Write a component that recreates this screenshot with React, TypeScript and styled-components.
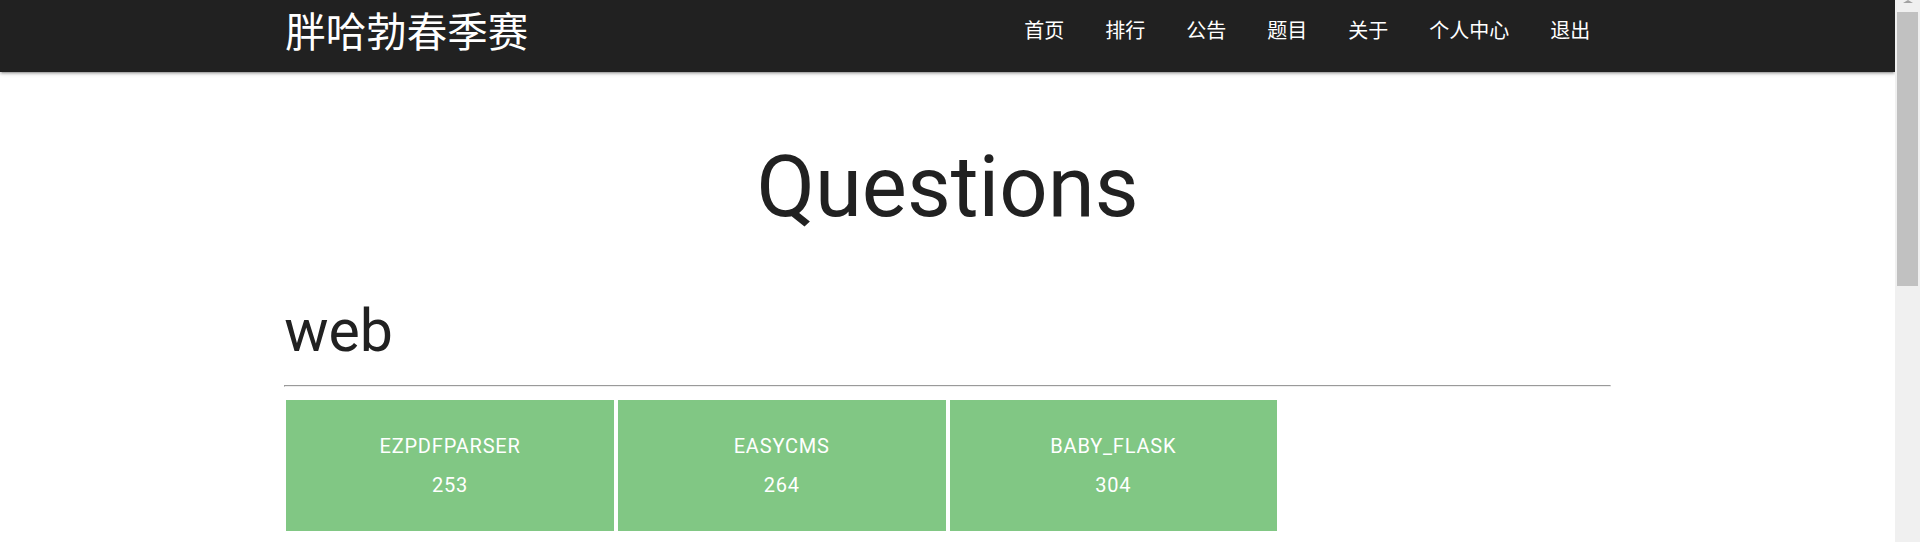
import React from "react";
import styled, { createGlobalStyle } from "styled-components";

const GlobalStyle = createGlobalStyle`
  html, body {
    margin: 0;
    padding: 0;
    height: 100%;
    overflow: hidden;
    background: #ffffff;
  }
  body {
    font-family: Roboto, "Noto Sans CJK SC", sans-serif;
    color: #212121;
  }
  #root { height: 100%; }
`;

const Shell = styled.div`
  display: flex;
  height: 100vh;
  width: 100%;
`;

const Main = styled.div`
  flex: 1;
  min-width: 0;
  overflow: hidden;
`;

const ScrollRail = styled.div`
  width: 25px;
  flex: none;
  background: #f0f0f0;
  display: flex;
  flex-direction: column;
  align-items: center;
`;

const ScrollArrow = styled.div`
  width: 0;
  height: 0;
  border-left: 5px solid transparent;
  border-right: 5px solid transparent;
  border-bottom: 3px solid #a3a3a3;
`;

const ScrollThumb = styled.div`
  width: 21px;
  height: 274px;
  margin-top: 9px;
  background: #c1c1c1;
`;

const Nav = styled.nav`
  height: 72px;
  background: #212121;
  box-shadow: 0 2px 2px 0 rgba(0, 0, 0, 0.14), 0 3px 1px -2px rgba(0, 0, 0, 0.12),
    0 1px 5px 0 rgba(0, 0, 0, 0.2);
  position: relative;
  z-index: 1;
`;

const Container = styled.div`
  width: 70%;
  margin: 0 auto;
`;

const NavInner = styled(Container)`
  height: 60px;
  display: flex;
  align-items: center;
  justify-content: space-between;
`;

const Brand = styled.a`
  align-self: flex-start;
  font-family: "Noto Sans CJK SC", sans-serif;
  font-size: 40.5px;
  line-height: normal;
  margin: 0 0 0 1px;
  color: #ffffff;
  text-decoration: none;
`;

const NavList = styled.ul`
  list-style: none;
  margin: 0;
  padding: 0;
  display: flex;
`;

const NavLink = styled.a`
  display: block;
  padding: 0 20.5px;
  font-family: "Noto Sans CJK SC", sans-serif;
  font-size: 20px;
  line-height: 60px;
  color: #ffffff;
  text-decoration: none;
`;

const PageTitle = styled.h1`
  font-family: Roboto, sans-serif;
  font-weight: 400;
  font-size: 85px;
  line-height: 94px;
  margin: 68px 0 0;
  text-align: center;
  color: #212121;
`;

const CategoryTitle = styled.h2`
  font-family: Roboto, sans-serif;
  font-weight: 400;
  font-size: 59px;
  line-height: 63px;
  margin: 65px 0 0;
  color: #212121;
`;

const Divider = styled.hr`
  height: 0;
  margin: 23px 0 13px;
  border-style: solid;
  border-width: 1px;
  border-color: #9a9a9a #eeeeee #eeeeee #9a9a9a;
`;

const CardGrid = styled.div`
  display: grid;
  grid-template-columns: repeat(4, 1fr);
`;

const Card = styled.a`
  margin: 0 2px;
  height: 131px;
  box-sizing: border-box;
  padding-top: 28px;
  background: #81c784;
  color: #ffffff;
  text-decoration: none;
  text-align: center;
  font-family: Roboto, sans-serif;
  font-size: 20px;
  letter-spacing: 0.8px;
`;

const CardName = styled.div`
  line-height: 36px;
  margin-bottom: 3px;
`;

const CardScore = styled.div`
  line-height: 36px;
`;

const navItems = ["首页", "排行", "公告", "题目", "关于", "个人中心", "退出"];

const questions = [
  { name: "EZPDFPARSER", score: 253 },
  { name: "EASYCMS", score: 264 },
  { name: "BABY_FLASK", score: 304 },
];

export default function App() {
  return (
    <>
      <GlobalStyle />
      <Shell>
        <Main>
          <Nav>
            <NavInner>
              <Brand href="#">胖哈勃春季赛</Brand>
              <NavList>
                {navItems.map((item) => (
                  <li key={item}>
                    <NavLink href="#">{item}</NavLink>
                  </li>
                ))}
              </NavList>
            </NavInner>
          </Nav>
          <PageTitle>Questions</PageTitle>
          <Container>
            <CategoryTitle>web</CategoryTitle>
            <Divider />
            <CardGrid>
              {questions.map((q) => (
                <Card key={q.name} href="#">
                  <CardName>{q.name}</CardName>
                  <CardScore>{q.score}</CardScore>
                </Card>
              ))}
            </CardGrid>
          </Container>
        </Main>
        <ScrollRail>
          <ScrollArrow />
          <ScrollThumb />
        </ScrollRail>
      </Shell>
    </>
  );
}
